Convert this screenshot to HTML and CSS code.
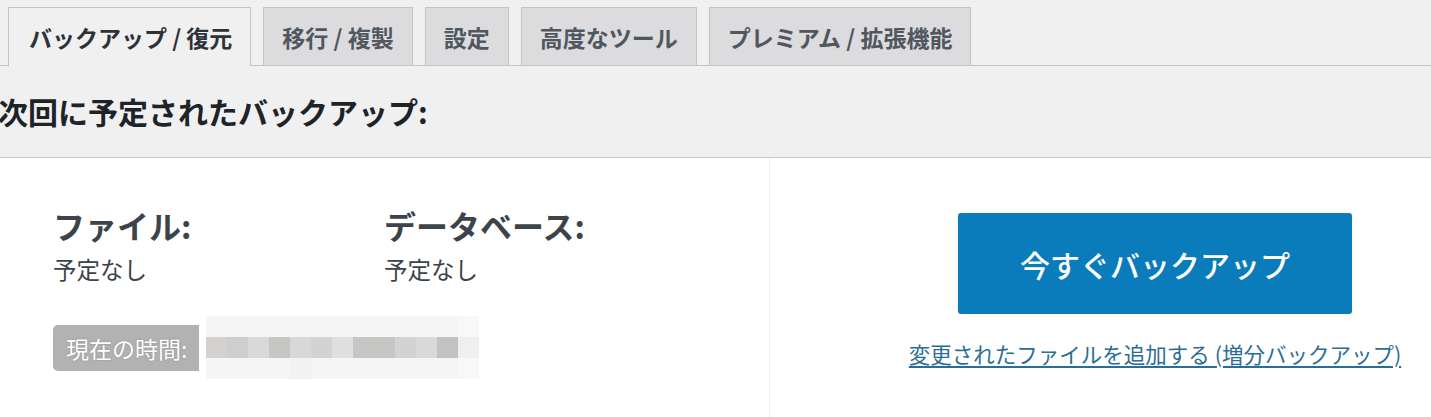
FILE: index.html
```html
<!DOCTYPE html>
<html lang="ja">
<head>
<meta charset="UTF-8">
<title>バックアップ / 復元</title>
<link rel="stylesheet" href="styles.css">
</head>
<body>
<nav class="tabs">
  <a class="tab active">バックアップ / 復元</a>
  <a class="tab">移行 / 複製</a>
  <a class="tab">設定</a>
  <a class="tab">高度なツール</a>
  <a class="tab">プレミアム / 拡張機能</a>
</nav>

<h2 class="next-title">次回に予定されたバックアップ:</h2>

<div class="panel">
  <div class="schedule">
    <div class="jobs">
      <div class="job">
        <h3>ファイル:</h3>
        <p>予定なし</p>
      </div>
      <div class="job">
        <h3>データベース:</h3>
        <p>予定なし</p>
      </div>
    </div>
    <div class="time-row">
      <span class="time-label">現在の時間:</span>
      <!-- the clock value is masked -->
      <div class="mosaic">
        <div class="row light">
          <i></i><i></i><i></i><i></i><i></i><i></i><i></i><i></i><i></i><i></i><i></i><i></i><i class="f"></i>
        </div>
        <div class="row mid">
          <i class="c1"></i><i class="c2"></i><i class="c3"></i><i class="c4"></i><i class="c5"></i><i class="c6"></i><i class="c7"></i><i class="c4"></i><i class="c4"></i><i class="c6"></i><i class="c3"></i><i class="c8"></i><i class="f"></i>
        </div>
        <div class="row light">
          <i></i><i></i><i></i><i></i><i class="e"></i><i></i><i></i><i></i><i></i><i></i><i></i><i></i><i class="f"></i>
        </div>
      </div>
    </div>
  </div>

  <div class="actions">
    <button class="backup-now">今すぐバックアップ</button>
    <a class="incremental" href="#">変更されたファイルを追加する (増分バックアップ)</a>
  </div>
</div>
</body>
</html>
```

FILE: styles.css
```css
body { margin: 0; background: #f0f0f1; font-family: "Noto Sans CJK JP", "Noto Sans", sans-serif; color: #1d2327; }

.tabs { display: flex; gap: 12px; padding: 7px 0 0 8px; border-bottom: 1px solid #c3c4c7; height: 58px; }
.tab { display: flex; align-items: center; padding: 0 18px; font-size: 23px; font-weight: 700; color: #50575e; background: #dcdcde; border: 1px solid #c3c4c7; border-bottom: none; text-decoration: none; }
.tab.active { background: #f0f0f1; color: #2c3338; margin-bottom: -1px; padding: 0 18px 0 20px; }

.next-title { margin: 0 0 0 -2px; height: 91px; line-height: 91px; font-size: 30px; font-weight: 700; border-bottom: 1px solid #c9c9cb; }

.panel { display: flex; background: #fff; height: 259px; }
.schedule { width: 716px; padding: 44px 0 0 53px; border-right: 1px solid #f0f0f1; }
.jobs { display: flex; }
.job { width: 331px; }
.job h3 { margin: 0; font-size: 32px; line-height: 46px; font-weight: 700; color: #3c434a; }
.job p { margin: 4px 0 0; font-size: 23.5px; line-height: 34px; color: #3c434a; }

.time-row { display: flex; align-items: center; margin-top: 30px; }
.time-label { background: #b2b2b2; color: #fff; font-size: 23px; height: 46px; line-height: 46px; padding: 0 12px 0 13px; border-radius: 5px 0 0 5px; text-shadow: 0 0 2px rgba(0,0,0,0.25); }
.mosaic { margin-left: 7px; display: flex; flex-direction: column; }
.mosaic .row { display: flex; height: 21px; }
.mosaic i { width: 21px; background: #f5f5f5; }
.mosaic .row.light i.e { background: #f1f2f3; }
.mosaic i.f { background: #f8f8f8; }
.mosaic .mid i.c1 { background: #d4d2d0; }
.mosaic .mid i.c2 { background: #cdcfcf; }
.mosaic .mid i.c3 { background: #d9d9d9; }
.mosaic .mid i.c4 { background: #c6c6c4; }
.mosaic .mid i.c5 { background: #d6d8da; }
.mosaic .mid i.c6 { background: #d3d3d3; }
.mosaic .mid i.c7 { background: #dfdfdf; }
.mosaic .mid i.c8 { background: #c2c2c2; }
.mosaic .mid i.f { background: #efefef; }

.actions { flex: 1; display: flex; flex-direction: column; align-items: center; padding: 55px 0 0 109px; }
.backup-now { width: 394px; height: 101px; border: none; border-radius: 3px; background: #0a7cbc; color: #fff; font-family: inherit; font-size: 30px; font-weight: 500; }
.incremental { margin-top: 24px; font-size: 21.5px; color: #2a6e98; text-decoration: underline; text-underline-offset: 3px; }
```
